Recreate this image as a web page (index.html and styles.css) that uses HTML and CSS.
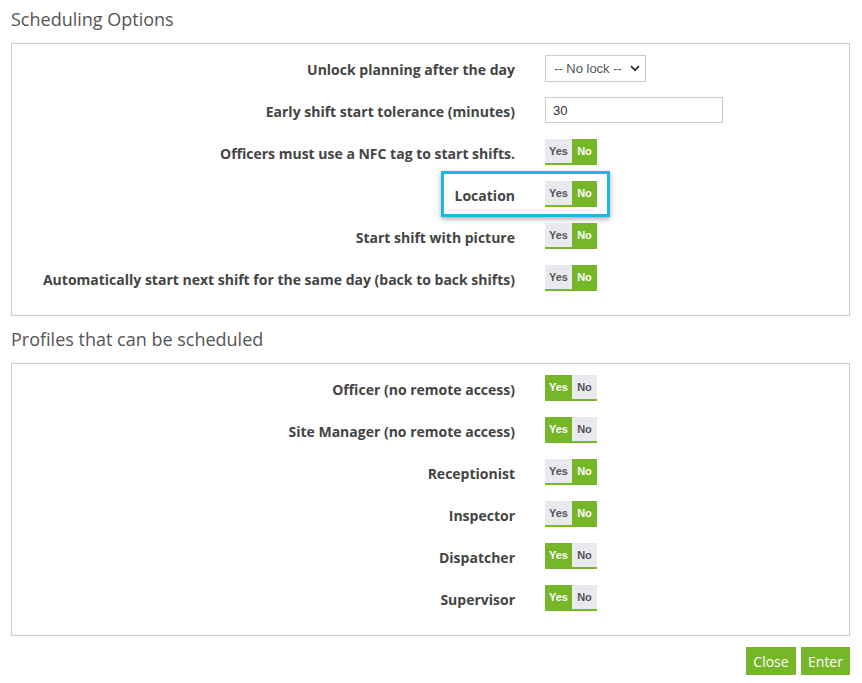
FILE: index.html
```html
<!DOCTYPE html>
<html>
<head>
<meta charset="utf-8">
<link rel="stylesheet" href="styles.css">
</head>
<body>
<div class="page">
  <h2 class="title">Scheduling Options</h2>
  <div class="panel">
    <div class="row">
      <div class="label">Unlock planning after the day</div>
      <div class="control">
        <div class="select-wrap">
          <select class="select"><option>-- No lock --</option></select>
          <svg class="chev" width="10" height="7" viewBox="0 0 10 7"><path d="M1 1.2 L5 5.2 L9 1.2" fill="none" stroke="#333" stroke-width="1.8"/></svg>
        </div>
      </div>
    </div>
    <div class="row">
      <div class="label">Early shift start tolerance (minutes)</div>
      <div class="control"><input class="input" type="text" value="30"></div>
    </div>
    <div class="row">
      <div class="label">Officers must use a NFC tag to start shifts.</div>
      <div class="control"><div class="toggle"><span class="opt">Yes</span><span class="opt on">No</span></div></div>
    </div>
    <div class="row highlight">
      <div class="label">Location</div>
      <div class="control"><div class="toggle"><span class="opt">Yes</span><span class="opt on">No</span></div></div>
    </div>
    <div class="row">
      <div class="label">Start shift with picture</div>
      <div class="control"><div class="toggle"><span class="opt">Yes</span><span class="opt on">No</span></div></div>
    </div>
    <div class="row">
      <div class="label">Automatically start next shift for the same day (back to back shifts)</div>
      <div class="control"><div class="toggle"><span class="opt">Yes</span><span class="opt on">No</span></div></div>
    </div>
  </div>

  <h2 class="title">Profiles that can be scheduled</h2>
  <div class="panel">
    <div class="row">
      <div class="label">Officer (no remote access)</div>
      <div class="control"><div class="toggle"><span class="opt on">Yes</span><span class="opt">No</span></div></div>
    </div>
    <div class="row">
      <div class="label">Site Manager (no remote access)</div>
      <div class="control"><div class="toggle"><span class="opt on">Yes</span><span class="opt">No</span></div></div>
    </div>
    <div class="row">
      <div class="label">Receptionist</div>
      <div class="control"><div class="toggle"><span class="opt">Yes</span><span class="opt on">No</span></div></div>
    </div>
    <div class="row">
      <div class="label">Inspector</div>
      <div class="control"><div class="toggle"><span class="opt">Yes</span><span class="opt on">No</span></div></div>
    </div>
    <div class="row">
      <div class="label">Dispatcher</div>
      <div class="control"><div class="toggle"><span class="opt on">Yes</span><span class="opt">No</span></div></div>
    </div>
    <div class="row">
      <div class="label">Supervisor</div>
      <div class="control"><div class="toggle"><span class="opt on">Yes</span><span class="opt">No</span></div></div>
    </div>
  </div>

  <div class="actions">
    <button class="btn">Close</button>
    <button class="btn">Enter</button>
  </div>
</div>
</body>
</html>
```
FILE: styles.css
```css
* { box-sizing: border-box; }
html, body { margin: 0; padding: 0; background: #fff; }
body { font-family: "Open Sans", "Liberation Sans", sans-serif; color: #444; }
.page { padding: 6px 12px 0 11px; width: 862px; }
.title {
  margin: 0 0 11px 0;
  font-size: 18px;
  line-height: 26px;
  font-weight: 400;
  color: #555;
}
.panel {
  border: 1px solid #ccc;
  padding: 3px 0 16px 0;
  margin-bottom: 10px;
}
.row {
  position: relative;
  display: grid;
  grid-template-columns: 503px 1fr;
  column-gap: 30px;
  align-items: center;
  height: 42px;
}
.label {
  text-align: right;
  font-size: 14px;
  font-weight: 700;
  color: #444;
  white-space: nowrap;
  position: relative;
  z-index: 1;
  padding-top: 3px;
}
.control { display: flex; align-items: center; position: relative; z-index: 1; }
.select-wrap { position: relative; width: 101px; height: 27px; }
.select {
  appearance: none;
  -webkit-appearance: none;
  width: 101px;
  height: 27px;
  border: 1px solid #ccc;
  border-radius: 0;
  background: #fff;
  padding: 0 0 0 8px;
  font-family: "Liberation Sans", Arial, sans-serif;
  font-size: 13px;
  color: #555;
}
.chev { position: absolute; right: 6px; top: 10px; pointer-events: none; }
.input {
  width: 178px;
  height: 26px;
  border: 1px solid #ccc;
  border-radius: 0;
  padding: 0 7px;
  font-family: "Liberation Sans", Arial, sans-serif;
  font-size: 13px;
  color: #333;
  outline: none;
}
.toggle {
  display: flex;
  height: 26px;
  border-bottom: 2px solid #76b729;
}
.opt {
  display: flex;
  align-items: center;
  justify-content: center;
  background: #e9e9ef;
  color: #555;
  font-family: "Liberation Sans", Arial, sans-serif;
  font-weight: 700;
  font-size: 11px;
}
.opt:first-child { width: 27px; }
.opt:last-child { width: 25px; }
.opt.on { background: #76b729; color: #fff; }
.highlight::after {
  content: "";
  position: absolute;
  left: 429px;
  top: -2px;
  width: 163px;
  height: 40px;
  border: 3px solid #1ab7ea;
  box-shadow: 0 2px 5px rgba(0, 0, 0, 0.35);
  background: #fff;
  z-index: 0;
}
.actions {
  display: flex;
  justify-content: flex-end;
  gap: 5px;
  padding-top: 1px;
}
.btn {
  height: 28px;
  width: 50px;
  border: none;
  background: #76b729;
  color: #fff;
  font-family: "Open Sans", sans-serif;
  font-size: 14px;
  padding: 0;
  border-radius: 0;
}
.btn + .btn { width: 49px; }
```
